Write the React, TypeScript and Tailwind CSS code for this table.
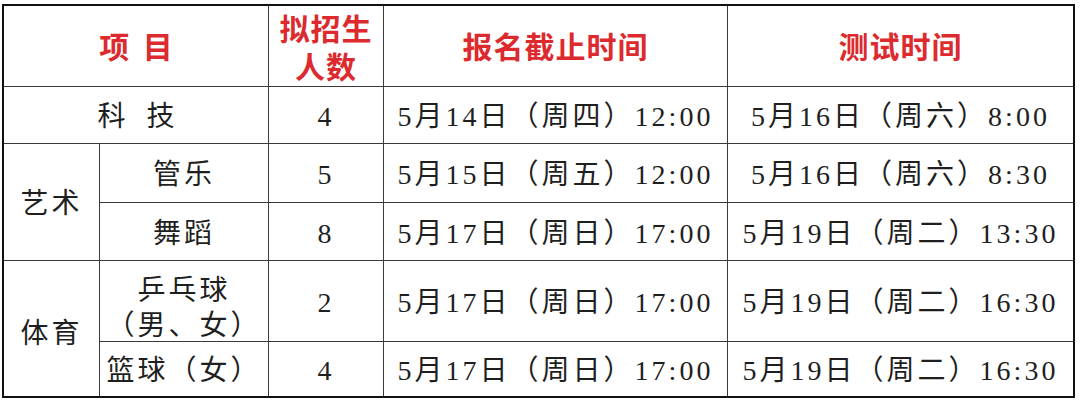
const body = "text-[28px] tracking-[3px] text-[#1f1f1f] pt-[4px]";
const head = "text-[30px] font-bold tracking-[1px] text-[#dc2a2e] pt-[3px]";
const cell = "bg-white flex items-center justify-center text-center";

export default function App() {
  return (
    <div
      className="w-[1080px] h-[404px] bg-white pl-[2px] pt-[4px]"
      style={{ fontFamily: '"Liberation Serif", "Noto Sans CJK SC", serif' }}
    >
      <div className="grid w-fit grid-cols-[95px_168px_114px_343px_345px] grid-rows-[80px_56px_58px_57px_80px_54px] gap-px bg-[#3a3a3a] border-2 border-[#111]">
        <div className={`${cell} ${head} col-span-2 tracking-[3px] pl-[3px]`}>项 目</div>
        <div className={`${cell} ${head} leading-[38px] pt-[6px]`}>
          拟招生
          <br />
          人数
        </div>
        <div className={`${cell} ${head}`}>报名截止时间</div>
        <div className={`${cell} ${head}`}>测试时间</div>

        <div className={`${cell} ${body} col-span-2 tracking-[7px] pl-[7px]`}>科 技</div>
        <div className={`${cell} ${body}`}>4</div>
        <div className={`${cell} ${body}`}>5月14日（周四）12:00</div>
        <div className={`${cell} ${body}`}>5月16日（周六）8:00</div>

        <div className={`${cell} ${body} row-span-2`}>艺术</div>
        <div className={`${cell} ${body}`}>管乐</div>
        <div className={`${cell} ${body}`}>5</div>
        <div className={`${cell} ${body}`}>5月15日（周五）12:00</div>
        <div className={`${cell} ${body}`}>5月16日（周六）8:30</div>

        <div className={`${cell} ${body}`}>舞蹈</div>
        <div className={`${cell} ${body}`}>8</div>
        <div className={`${cell} ${body}`}>5月17日（周日）17:00</div>
        <div className={`${cell} ${body}`}>5月19日（周二）13:30</div>

        <div className={`${cell} ${body} row-span-2 pt-[10px]`}>体育</div>
        <div className={`${cell} text-[28px] tracking-[3px] text-[#1f1f1f] leading-[35px] pt-[14px]`}>
          乒乓球
          <br />
          （男、女）
        </div>
        <div className={`${cell} ${body}`}>2</div>
        <div className={`${cell} ${body}`}>5月17日（周日）17:00</div>
        <div className={`${cell} ${body}`}>5月19日（周二）16:30</div>

        <div className={`${cell} ${body}`}>篮球（女）</div>
        <div className={`${cell} ${body}`}>4</div>
        <div className={`${cell} ${body}`}>5月17日（周日）17:00</div>
        <div className={`${cell} ${body}`}>5月19日（周二）16:30</div>
      </div>
    </div>
  );
}
